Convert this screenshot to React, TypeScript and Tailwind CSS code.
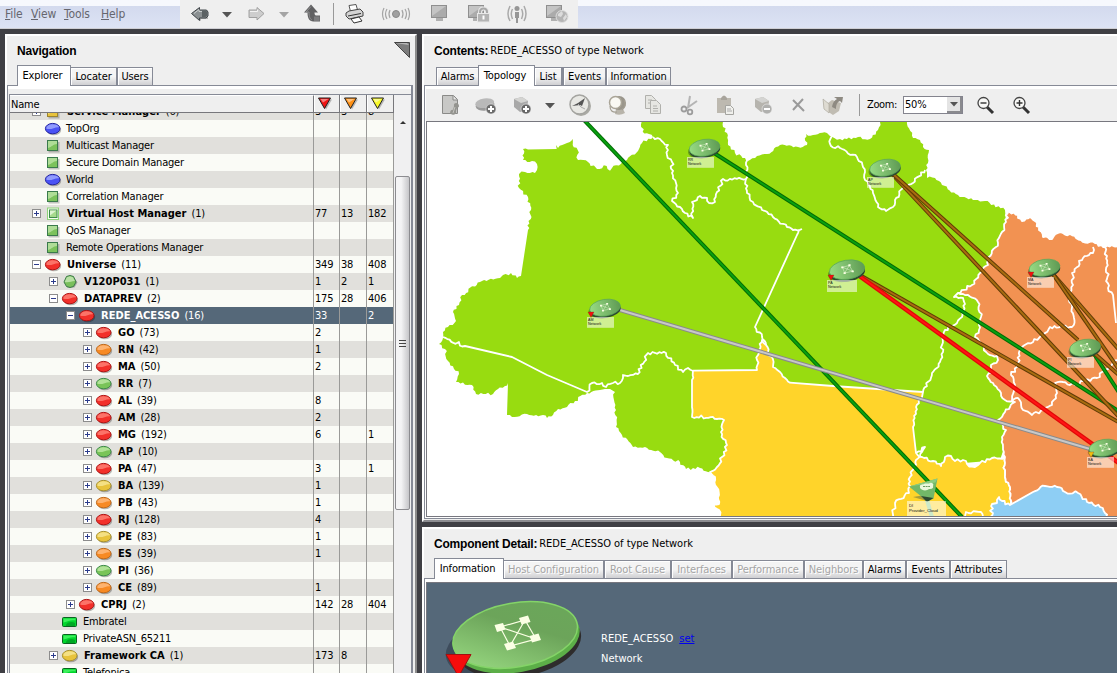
import React from 'react';

type Kind = 'red' | 'orange' | 'yellow' | 'green' | 'blue' | 'square' | 'ysquare' | 'framed' | 'hex' | 'card';
type Row = { n: string; c?: number; k: Kind; l: number; e?: '+' | '-'; v?: [string, string, string]; sel?: boolean };

const rows: Row[] = [
  { n: 'Service Manager', c: 6, k: 'ysquare', l: 0, e: '+', v: ['3', '3', '8'] },
  { n: 'TopOrg', k: 'blue', l: 0 },
  { n: 'Multicast Manager', k: 'square', l: 0 },
  { n: 'Secure Domain Manager', k: 'square', l: 0 },
  { n: 'World', k: 'blue', l: 0 },
  { n: 'Correlation Manager', k: 'square', l: 0 },
  { n: 'Virtual Host Manager', c: 1, k: 'framed', l: 0, e: '+', v: ['77', '13', '182'] },
  { n: 'QoS Manager', k: 'square', l: 0 },
  { n: 'Remote Operations Manager', k: 'square', l: 0 },
  { n: 'Universe', c: 11, k: 'red', l: 0, e: '-', v: ['349', '38', '408'] },
  { n: 'V120P031', c: 1, k: 'hex', l: 1, e: '+', v: ['1', '2', '1'] },
  { n: 'DATAPREV', c: 2, k: 'red', l: 1, e: '-', v: ['175', '28', '406'] },
  { n: 'REDE_ACESSO', c: 16, k: 'red', l: 2, e: '-', v: ['33', '', '2'], sel: true },
  { n: 'GO', c: 73, k: 'red', l: 3, e: '+', v: ['2', '', ''] },
  { n: 'RN', c: 42, k: 'orange', l: 3, e: '+', v: ['1', '', ''] },
  { n: 'MA', c: 50, k: 'red', l: 3, e: '+', v: ['2', '', ''] },
  { n: 'RR', c: 7, k: 'green', l: 3, e: '+' },
  { n: 'AL', c: 39, k: 'red', l: 3, e: '+', v: ['8', '', ''] },
  { n: 'AM', c: 28, k: 'red', l: 3, e: '+', v: ['2', '', ''] },
  { n: 'MG', c: 192, k: 'red', l: 3, e: '+', v: ['6', '', '1'] },
  { n: 'AP', c: 10, k: 'green', l: 3, e: '+' },
  { n: 'PA', c: 47, k: 'red', l: 3, e: '+', v: ['3', '', '1'] },
  { n: 'BA', c: 139, k: 'yellow', l: 3, e: '+', v: ['1', '', ''] },
  { n: 'PB', c: 43, k: 'orange', l: 3, e: '+', v: ['1', '', ''] },
  { n: 'RJ', c: 128, k: 'red', l: 3, e: '+', v: ['4', '', ''] },
  { n: 'PE', c: 83, k: 'yellow', l: 3, e: '+', v: ['1', '', ''] },
  { n: 'ES', c: 39, k: 'orange', l: 3, e: '+', v: ['1', '', ''] },
  { n: 'PI', c: 36, k: 'green', l: 3, e: '+' },
  { n: 'CE', c: 89, k: 'orange', l: 3, e: '+', v: ['1', '', ''] },
  { n: 'CPRJ', c: 2, k: 'red', l: 2, e: '+', v: ['142', '28', '404'] },
  { n: 'Embratel', k: 'card', l: 1 },
  { n: 'PrivateASN_65211', k: 'card', l: 1 },
  { n: 'Framework CA', c: 1, k: 'yellow', l: 1, e: '+', v: ['173', '8', ''] },
  { n: 'Telefonica', k: 'card', l: 1 },
];

const tones: Record<string, [string, string, string]> = {
  red: ['#ff8a7e', '#f2302a', '#b01414'],
  orange: ['#ffc08a', '#f78a24', '#c0691a'],
  yellow: ['#f8ea9c', '#e8c33c', '#a8912c'],
  green: ['#c4ecae', '#79c458', '#3c8a4a'],
  blue: ['#aab4ff', '#4a52f5', '#2424a0'],
};

function Glyph({ k }: { k: Kind }) {
  const t = tones[k];
  return (
    <svg width="18" height="16" viewBox="0 0 18 16" className="shrink-0">
      {t && (
        <g>
          <ellipse cx="9.8" cy="8.900" rx="7.4" ry="5.3" fill="#000" opacity=".28" />
          <ellipse cx="8.700" cy="7.600" rx="7.300" ry="5.200" fill={t[1]} stroke={t[2]} />
          <path d="M2.2 7.600C2.500 4.500 5.500 3.200 8.700 3.200S14.600 4.300 15.100 6.200C11 5.600 7 9.400 2.200 7.600z" fill={t[0]} opacity=".75" />
        </g>
      )}
      {(k === 'square' || k === 'ysquare') && (
        <g>
          <rect x="4.500" y="4" width="11" height="10.500" fill="#000" opacity=".22" />
          <rect x="3.500" y="2.500" width="10" height="10" fill={k === 'square' ? '#7cc25c' : '#e8c33c'} stroke={k === 'square' ? '#3a7a4c' : '#9a8430'} />
          <path d="M4 3h9v3c-4 0-5 3-9 4z" fill={k === 'square' ? '#c4e8b0' : '#f6e8a0'} opacity=".7" />
        </g>
      )}
      {k === 'framed' && (
        <g>
          <rect x="3.500" y="2" width="11" height="11.500" fill="#f4fff0" stroke="#8ed47a" />
          <rect x="5.500" y="4" width="7.500" height="7.500" fill="#a6da8c" stroke="#3f8a4c" />
          <path d="M6 4.500h6.500l-6.500 5z" fill="#dcf4d0" />
        </g>
      )}
      {k === 'hex' && (
        <g>
          <path d="M5 4h8.500l3 4.500-3 5H6z" fill="#000" opacity=".25" />
          <path d="M5.500 2.500L9 1.500l3.500 1 2.500 5.500-2.500 4.500L9 13.500l-3.500-1L3 8z" fill="#79bf5c" stroke="#3c7a48" />
          <path d="M5.800 3.200L9 2.300l3 .9 2 3.800c-4 0-6 2-10.300 1z" fill="#d4f0c4" opacity=".7" />
        </g>
      )}
      {k === 'card' && (
        <g>
          <rect x="1.500" y="3.500" width="14" height="9" rx="1" fill="#00d62c" stroke="#0a6420" />
          <path d="M2.500 4.500h12v2c-5-1-7 1-12 2z" fill="#3cf05c" />
          <path d="M5 11c1-3 6-4 9-2v3H5z" fill="#00a824" />
        </g>
      )}
    </svg>
  );
}

function TreeRow({ r, i }: { r: Row; i: number }) {
  const bg = r.sel ? 'bg-[#556879] text-white' : i % 2 ? 'bg-[#fafbf6]' : 'bg-[#e1e0dc]';
  const ink = r.sel ? 'text-white' : 'text-black';
  return (
    <div className={`flex h-[17px] w-[384px] shrink-0 items-center ${bg}`}>
      <div className="flex h-full w-[303px] items-center" style={{ paddingLeft: 22 + 17 * r.l }}>
        <div className="flex h-[9px] w-[9px] shrink-0">
          {r.e && (
            <svg width="9" height="9" viewBox="0 0 9 9">
              <rect x=".5" y=".5" width="8" height="8" fill="#fff" stroke="#8c8c8c" />
              <path d={r.e === '+' ? 'M2 4.500h5M4.500 2v5' : 'M2 4.500h5'} stroke="#2c3c8c" />
            </svg>
          )}
        </div>
        <div className="ml-[3px] flex"><Glyph k={r.k} /></div>
        {r.e ? (
          <div className={`ml-[5px] flex items-center gap-[5px] whitespace-pre ${ink}`}>
            <span className="font-bold tracking-[0.02px]">{r.n}</span>
            <span>({r.c})</span>
          </div>
        ) : (
          <div className="ml-[4px] whitespace-pre text-black">{r.n}</div>
        )}
      </div>
      <div className={`flex h-full w-[26px] items-center border-l border-[#9a9a98] pl-px ${ink}`}>{r.v?.[0]}</div>
      <div className={`flex h-full w-[27px] items-center border-l border-[#9a9a98] pl-px ${ink}`}>{r.v?.[1]}</div>
      <div className={`flex h-full w-[28px] items-center border-x border-[#9a9a98] pl-px ${ink}`}>{r.v?.[2]}</div>
    </div>
  );
}

function HeadCell({ w, fill }: { w: string; fill: string }) {
  return (
    <div className={`flex h-[17px] items-center border-l border-white bg-[#efefef] pl-[2px] ${w} border-r border-r-[#77777b]`}>
      <svg width="16" height="15" viewBox="0 0 16 15">
        <path d="M3 3.500h12L9 13.500z" fill="#000" opacity=".25" />
        <path d="M1.500 2h12L7.500 12.500z" fill={fill} stroke="#222" strokeLinejoin="round" />
        <path d="M3.500 3h8L6 6.500z" fill="#fff" opacity=".45" />
      </svg>
    </div>
  );
}

function Tab({ w, label, active, off }: { w: string; label: string; active?: boolean; off?: boolean }) {
  return active ? (
    <div className={`z-10 -mb-px flex h-[21px] shrink-0 justify-center border border-b-0 border-[#868a96] bg-white pt-[3px] pr-[3px] tracking-[-0.15px] text-black ${w}`}>{label}</div>
  ) : (
    <div className={`flex h-[18px] shrink-0 items-center justify-center border border-b-0 border-[#868a96] bg-linear-to-b from-[#f4f4f4] from-50% to-[#cfcfd2] pt-px tracking-[-0.1px] whitespace-pre shadow-[inset_1px_1px_0_#fff] ${w} ${off ? 'text-[#a4a4a4] [text-shadow:1px_1px_0_#fff]' : 'text-black'}`}>{label}</div>
  );
}

function Cell({ w, children }: { w: string; children: React.ReactNode }) {
  return (
    <div className={`flex shrink-0 items-center justify-center ${w}`}>
      <svg width="32" height="26" viewBox="-16 -13 32 26" className="shrink-0">{children}</svg>
    </div>
  );
}

const Caret = ({ c }: { c: string }) => <path d="M-5-2h10L0 3.500z" fill={c} />;
const Screen = () => (
  <g>
    <path d="M-3 4h7v3h-7z" fill="#b0b0b0" />
    <rect x="-7.500" y="-8.500" width="15" height="12" fill="#ababab" stroke="#8f8f8f" />
    <path d="M-7-8H7L-7 2z" fill="#c4c4c4" />
  </g>
);
const Cube = ({ sign }: { sign: '+' | '-' }) => (
  <g>
    <path d="M-7-6L1-8l6 4-1 9-7 2-6-5z" fill={sign === '+' ? '#a8a8a8' : '#b6b4ae'} />
    <path d="M-7-6L1-8l6 4-7 2z" fill="#d4d4d2" />
    <circle cx="5" cy="4" r="5" fill={sign === '+' ? '#666' : '#b0b0ae'} stroke="#efefef" strokeWidth=".6" />
    <path d={sign === '+' ? 'M2 4h6M5 1v6' : 'M2 4h6'} stroke="#fff" strokeWidth="2" />
  </g>
);

function TopTools() {
  return (
    <div className="flex h-[28px] w-[398px] items-stretch bg-[#efefef] pl-px">
      <Cell w="w-[38px]">
        <path d="M-7 1L1 7V5h7v-6l-1-3H1z" fill="#000" opacity=".25" />
        <path d="M-8.500-.5L-.5-6.500v2.500h7l1.500 2v4L6 4H-.5v2.500z" fill="#8b9092" stroke="#41464a" strokeLinejoin="round" />
        <path d="M-6-.5L-1-4.500V-2.500h6" fill="none" stroke="#c8cccc" />
        <path d="M2-3.500h4l1.500 2v3L5.500 3H2z" fill="#5c6264" />
      </Cell>
      <Cell w="w-[16px]"><Caret c="#555" /></Cell>
      <Cell w="w-[42px]">
        <path d="M8-.5L1-6.500V-4h-8v7.500h8V6z" fill="#cdcdcd" stroke="#a0a0a0" strokeLinejoin="round" />
        <path d="M-6-2.500H1.500V-4.500" fill="none" stroke="#f2f2f2" />
      </Cell>
      <Cell w="w-[14px]"><Caret c="#a4a4a4" /></Cell>
      <Cell w="w-[42px]">
        <path d="M-1-9.500l-7 8h3.500c0 5 1.500 9 6 9h6.500V1.500H4c-1 0-1.500-1-1.500-3H6z" fill="#606062" />
        <path d="M-1-7.500l-5 5.500h3c0 5 1 7 3 8" fill="none" stroke="#909090" />
        <path d="M2 2.500h5.500v4.500H2z" fill="#7c7c7e" />
      </Cell>
      <div className="mt-[3px] h-[22px] w-px bg-[#999]" />
      <Cell w="w-[40px]">
        <path d="M-5-8.500l7-1 2 7-7 2z" fill="#fff" stroke="#555" />
        <path d="M-8-1l3-2 11-2 3 3v4L-5 5l-3-3z" fill="#d4d4d4" stroke="#444" />
        <path d="M-6 2l13-2.500" stroke="#333" />
        <path d="M-3 5l8-2 3 4-8 2z" fill="#fff" stroke="#333" />
      </Cell>
      <Cell w="w-[44px]">
        <circle r="3.500" fill="#a0a0a0" stroke="#888" />
        <g fill="none" stroke="#a4a4a4" strokeWidth="1.200">
          <path d="M-6-4q-2 4 0 8M-9-5q-3 5 0 10M-12-6q-3 6 0 12M6-4q2 4 0 8M9-5q3 5 0 10M12-6q3 6 0 12" />
        </g>
      </Cell>
      <Cell w="w-[42px]"><Screen /></Cell>
      <Cell w="w-[38px]">
        <g transform="translate(-3 0)"><Screen /></g>
        <path d="M1 1v-3q0-3.500 3.500-3.500T8-2v3" fill="none" stroke="#e8e8e8" strokeWidth="4" />
        <path d="M1 1v-3q0-3.500 3.500-3.500T8-2v3" fill="none" stroke="#a8a8a8" strokeWidth="2" />
        <rect x="-1.500" y="-.5" width="12" height="8.500" fill="#b4b4b4" stroke="#e8e8e8" />
        <path d="M4.500 1.500v4" stroke="#fff" strokeWidth="2" />
      </Cell>
      <Cell w="w-[38px]">
        <circle cy="-5.500" r="2.500" fill="#969696" />
        <path d="M-2-2h4v6H1v5h-2V4h-1z" fill="#969696" />
        <path d="M-4.500-5q-2.500 4.500 0 10M-7-8q-4 8 0 15M4.500-5q2.500 4.500 0 10M7-8q4 8 0 15" fill="none" stroke="#a9a9a9" strokeWidth="1.500" />
      </Cell>
      <Cell w="w-[42px]">
        <g transform="translate(-3 0)"><Screen /></g>
        <circle cx="5" cy="2.500" r="6" fill="#b4b4b4" stroke="#dedede" />
        <path d="M1 0l4-3 1 3-2 3-3-1zM6 4l3-4 1 3-3 4z" fill="#dcdcdc" />
      </Cell>
    </div>
  );
}

function MapTools() {
  return (
    <div className="flex h-[32px] items-center bg-[#efefef]">
      <Cell w="w-[48px]">
        <path d="M-7.500-9.500h11l4 4v14h-15z" fill="#c8c8c6" stroke="#8a8a88" />
        <path d="M3-9v4h4" fill="#e8e8e8" stroke="#8a8a88" />
        <path d="M1 9c-2-1 0-5 2-4l1-4c-1-4 5-4 5 0 0 2-2 1-2 2l-1 3c1 3-3 5-5 3z" fill="#94948f" />
        <path d="M3 8l2-6" stroke="#c4c4c0" />
      </Cell>
      <Cell w="w-[24px]">
        <ellipse cx="-1" cy="0" rx="9.500" ry="5.500" fill="#9a9a9a" transform="rotate(-8)" />
        <ellipse cx="-1" cy="-2" rx="9.500" ry="4.800" fill="#b9b9b9" transform="rotate(-8)" />
        <circle cx="5" cy="4" r="5" fill="#6c6c6c" stroke="#efefef" strokeWidth=".5" />
        <path d="M2 4h6M5 1v6" stroke="#fff" strokeWidth="2" />
      </Cell>
      <Cell w="w-[46px]"><Cube sign="+" /></Cell>
      <Cell w="w-[12px]"><Caret c="#555" /></Cell>
      <Cell w="w-[48px]">
        <circle cx="1" cy="1" r="10" fill="#aaaaa4" />
        <circle cx="-.5" cy="-.5" r="9.500" fill="#e8e8e4" stroke="#a4a4a0" strokeWidth="1.500" />
        <path d="M5-7L2 1l-2-1-8 1 6-3z" fill="#555" />
        <path d="M-2-1l3 3 4 2" fill="none" stroke="#aaa" />
      </Cell>
      <Cell w="w-[26px]">
        <path d="M-1 4h7l2 4q-5 3-10 1z" fill="#b8b4aa" />
        <circle cx="2" cy="-2" r="7" fill="#9a968c" />
        <circle cx="-1.500" cy="-2.500" r="6" fill="#faf9f4" stroke="#aaa598" strokeWidth="1.500" />
        <path d="M-7 1q0 7 7 6M7-5q3 6-2 10" fill="none" stroke="#a39e92" strokeWidth="1.200" />
      </Cell>
      <Cell w="w-[46px]">
        <g fill="#e6e6e2" stroke="#b0b0ac">
          <path d="M-7.500-9.500h6l4 4v9h-10z" />
          <path d="M-2.500-4.500h6l4 4v9h-10z" />
          <path d="M-5-5h4M-5-2h3M0 1h4M0 3.500h5M0 6h5" />
        </g>
      </Cell>
      <Cell w="w-[26px]">
        <path d="M1-9L-1 3M8-4L-2 3" stroke="#b4b4b4" strokeWidth="2" />
        <circle cx="-5" cy="4" r="2.500" fill="none" stroke="#9c9c9c" strokeWidth="1.800" />
        <circle cx="1" cy="7" r="2.300" fill="none" stroke="#9c9c9c" strokeWidth="1.800" />
      </Cell>
      <Cell w="w-[46px]">
        <rect x="-8" y="-7" width="14" height="15" fill="#bdb9b0" />
        <path d="M-4-7q3-5 6 0v2h-6z" fill="#a8a49c" />
        <path d="M.5.500h5l3 3v6h-8z" fill="#f0f0ec" stroke="#a4a4a0" />
        <path d="M2 4h4M2 6h5" stroke="#aaa" />
      </Cell>
      <Cell w="w-[28px]"><g transform="translate(0 0)"><Cube sign="-" /></g></Cell>
      <Cell w="w-[44px]"><path d="M-5-5L6 6M5-6L-5 5" stroke="#9a9a9a" strokeWidth="2" /></Cell>
      <Cell w="w-[26px]">
        <path d="M-10-5l5 3 4-3 9 3-2 8-6 4-9-6z" fill="#c0bcb2" />
        <path d="M-10-6l6 5v9l-5-4z" fill="#dedbd2" stroke="#a8a498" strokeWidth=".6" />
        <path d="M-1 2c1-5 3-7 5-8L1-8h9l-1 6-2-2c-3 1-4 4-4 8z" fill="#8e8a82" />
      </Cell>
      <div className="ml-[13px] h-[22px] w-px bg-[#999]" />
      <span className="ml-[7px] w-[36px] whitespace-pre tracking-[-0.4px]">Zoom:</span>
      <div className="flex h-[18px] w-[60px] border border-[#84848e] bg-white">
        <span className="w-[43px] pl-px leading-[16px]">50%</span>
        <div className="flex w-[15px] items-center justify-center border-r-2 border-b-2 border-[#8a8a8e] bg-[#e4e4e4]">
          <svg width="8" height="5" viewBox="0 0 8 5"><path d="M0 0h8L4 4.500z" fill="#555" /></svg>
        </div>
      </div>
      {[false, true].map((plus) => (
        <div key={String(plus)} className={plus ? 'ml-[4px]' : 'ml-[6px]'}>
          <svg width="32" height="26" viewBox="-16 -13 32 26">
            <path d="M2 2l6 6" stroke="#333" strokeWidth="3" />
            <circle cx="-1.500" cy="-2" r="5.500" fill="#f8f8f6" stroke="#444" strokeWidth="1.300" />
            <path d={plus ? 'M-4.500-2h6M-1.500-5v6' : 'M-4.500-2h6'} stroke="#333" strokeWidth="1.400" />
          </svg>
        </div>
      ))}
    </div>
  );
}

// Terrain outlines are coarse point lists; rough() adds coastline detail between the points.
const hash = (a: number, b: number) => {
  const s = Math.sin(a * 12.9898 + b * 78.233) * 43758.5453;
  return s - Math.floor(s) - 0.5;
};
function rough(src: string, close?: boolean) {
  const p = src.trim().split(/\s+/).map((q) => q.split(',').map(Number));
  if (close) p.push(p[0]);
  let d = `M${p[0][0]} ${p[0][1]}`;
  for (let i = 1; i < p.length; i++) {
    const [x0, y0] = p[i - 1];
    const [x1, y1] = p[i];
    const len = Math.hypot(x1 - x0, y1 - y0);
    if (len < 26) {
      const n = Math.floor(len / 2.2);
      for (let j = 1; j < n; j++) {
        const x = x0 + ((x1 - x0) * j) / n;
        const y = y0 + ((y1 - y0) * j) / n;
        const h = hash(Math.round(x), Math.round(y)) * 3.2;
        d += `L${(x - ((y1 - y0) / len) * h).toFixed(1)} ${(y + ((x1 - x0) / len) * h).toFixed(1)}`;
      }
    }
    d += `L${x1} ${y1}`;
  }
  return close ? d + 'Z' : d;
}

const land =
  '641,115 642.700,131.700 649,134 653,137 642,143 638,151 627,160 612,168 610,170.700 606.700,166 597,169 588,162 578,160 577.700,150 572.700,145 572.700,139 567,143 558,148 556,145 556.700,149 528,149.500 523,149 523,160 532,161 537,164 537,170 535,173 525,172 519,174 519,188 528,197 531,210 528,230 521,276 517,278 511,273 503,275 500,278 482,281 462,295 459,305 453,312 456,321 448,327 443,332 443,338 439,344 445,349 448,361 459,374 456,382 472,385 476,394 493,394 508,383 507,415 512,417 527,414 543,415 547,418 553,415 558,409 567,407 575,401 587,393 600,390 610,389 615,392 614,400 616,410 616,427 622,435 633,447 645,447 660,452 667,458 680,462 686,469 700,468 708,472 760,480 1000,460 1020,400 1005,210 985,201 973,200 958,195 942,185 935,178 927,178 926,170 928,163 929,150 923,147 920,140 913,138 907,124 906,115 880,115 880,122 878,130 870,139 858,137 840,139 830,136 827,133 813,135 806,134 807,145 798,147 780,145 767,154 757,156 748,161 745,158 735,153 728,145 727,133 723,127 723,115';
const yellow =
  '762,340 758,355 757,370 693,370.700 692,380 692,407 692,417 713,417 717,419 724,420 721,432 727,445 722,457 717,467 710,472 715,477 715,485 719,495 719,504 713.700,504.700 719,510 720,520 1012,520 1010,487 1005,477 1005,463 1005,457 992,458 980,463 975,467 967,464 963,460 955,461 951,456 945,457 941,466 933,461 922,457 916,453 913,427 916,407 922,397 923,392 833,386 790,382.700 785,378 780,372 773,367 772,357 768,352 766,345';
const orange =
  '1007.700,211 1018,215 1022,221 1030,217 1039,227 1043,237 1052,239 1058,233 1070,234 1083,242 1095,243 1103,247 1125,246 1125,525 1010,525 1010,505 1010,487 1005,477 1005,463 1005,457 1003,447 1002,437 1006,430 998,420 1005,412 1015,402 1005,400 1001,393 993,383 987,376 992,373 991,365 998,360 997,356 988,354 982,345 975,337 979,330 981,317 978,302 968,295 958,293 972,285 980,273 988,265 988,260 998,243 1002,232 1006,222';
const blue =
  '1010,505 1002,501 999,497 997,503 992,504 991,522 1108,522 1105,513 1100,507 1087,502 1078,493 1065,492 1057,487 1045,486 1033,492';
const borders = [
  '653,137 660,139 668,145 667,155 672,162 672,173 676,183 678,193 672,201 680,207 685,213 693,218 692,202 700,196 707,198 709,203 715,202 717,192 723,179 746,179',
  '746,158 746,179 747,193 753,202 762,210 773,217 787,227 793,230 802,229',
  '799,230 797,235 755,327 762,337 766,345',
  '443,337 465,346 512,357 547,375 587,392 592,383 602,383 606,387 613,383 620,383 623,375 638,374 648,353 666,353 675,365 683,372 688,368 693,371',
  '830,134 831,146 840,148 857,157 863,167 865,180 873,193 878,207 886,211 893,207 895,200 903,188 913,183 925,170',
  '958,293 954,297 963,298 965,304 962,317 957,323 945,330 942,345 943,352 940,362 932,373 923,392',
  '1093,247 1093,253 1083,258 1072,273 1073,285 1069,295 1074,318 1072,327 1050,327 1043,335 1022,347 1017,367 1011,375 1015,387 1012,401 1018,398 1023,410 1032,415 1043,410 1052,405 1057,393 1055,383 1063,382 1075,385 1083,381 1097,378 1102,372 1118,360',
  '1105,247 1107,263 1108,288 1113,295 1116,323',
  '916,453 925,447 922,452 916,460 910,477 909,493 895,503 892,518',
  '965,516 966,512 981,512 983,516',
];

const links: [number, number, number, number, 'g' | 'b' | 'r' | 's'][] = [
  [583, 119, 962, 517, 'g'],
  [714, 153, 1120, 412, 'g'],
  [618, 309.5, 1090, 449, 's'],
  [892, 174, 1120, 418, 'b'],
  [893, 174, 1078, 340, 'b'],
  [858, 274, 1120, 423, 'b'],
  [858, 275, 1120, 464, 'r'],
  [1053, 274, 1120, 351, 'b'],
  [1053, 274, 1120, 371, 'b'],
  [1094, 354, 1120, 394, 'g'],
  [1095, 354, 1120, 376, 'b'],
];
const linkInk = { g: ['#046a04', '#08a010'], b: ['#5f3a06', '#a86c10'], r: ['#e00808', '#ff1414'], s: ['#8a8a8a', '#c8c8c8'] };

function Mesh() {
  return (
    <g stroke="#d8f0c8" strokeWidth=".5" fill="#fbffe4">
      <path d="M-4-2L2-3.500M-4-2L-2 3M2-3.500L5 1.500M-2 3L5 1.500M-4-2L5 1.500M2-3.500L-2 3" fill="none" />
      <path d="M-5-2.700h1.900v1.600H-5zM1.200-4.500h1.900v1.600H1.200zM-3 2.400h1.900V4H-3zM4 .8h1.900v1.600H4z" stroke="none" />
    </g>
  );
}

function Node({ x, y, s = 1, lx, ly, lw = 27, name, mark }: { x: number; y: number; s?: number; lx: number; ly: number; lw?: number; name: string; mark?: string }) {
  return (
    <g>
      <g transform={`translate(${x} ${y}) scale(${s})`}>
        <ellipse cx="-2" cy="2.500" rx="15" ry="8" fill="#234a20" opacity=".45" transform="rotate(-9)" />
        <ellipse cx="0" cy="2.500" rx="15.500" ry="8" fill="#2d4a30" transform="rotate(-9)" />
        <ellipse cx="0" cy=".2" rx="15.500" ry="8.300" fill="url(#disc)" stroke="#5aa858" strokeWidth=".7" transform="rotate(-9)" />
        <Mesh />
      </g>
      <rect x={lx} y={ly} width={lw} height={lw * 0.4} fill="#fff" opacity=".55" />
      <text x={lx + 1} y={ly + 4.2} fontSize="3.600" fill="#111">{name}</text>
      <text x={lx + 1} y={ly + 8} fontSize="3.600" fill="#111">Network</text>
      {mark && <path d={`M${lx + 1} ${ly - 5}h6l-3 5.500z`} fill={mark} stroke="#7a3010" strokeWidth=".3" />}
    </g>
  );
}

function TopologyMap() {
  return (
    <svg className="block h-[394px] w-[690px] shrink-0" viewBox="427 122 690 394" fontFamily="Liberation Sans, sans-serif" letterSpacing="0">
      <defs>
        <linearGradient id="disc" x1="0" x2="1"><stop offset="0" stopColor="#98dc84" /><stop offset="1" stopColor="#5f9a54" /></linearGradient>
      </defs>
      <path d={rough(land, true)} fill="#98dc10" />
      <g stroke="#fff" strokeWidth="1.800" strokeLinejoin="round">
        <path d={rough(yellow, true)} fill="#ffd42a" />
        <path d={rough(orange, true)} fill="#f29252" />
        <path d={rough(blue, true)} fill="#8ecef4" />
        {borders.map((b) => <path key={b} d={rough(b)} fill="none" />)}
      </g>
      {links.map(([a, b, c, d, k], i) => (
        <g key={i}>
          <path d={`M${a} ${b}L${c} ${d}`} stroke={linkInk[k][0]} strokeWidth={k === 'r' ? 4.5 : 4} />
          <path d={`M${a} ${b}L${c} ${d}`} stroke={linkInk[k][1]} strokeWidth="2" />
        </g>
      ))}
      <path d="M927 500l5 17" stroke="#8fcf88" strokeWidth="4" />
      <Node x={704.5} y={147.5} lx={687} ly={157} name="RR" />
      <Node x={885} y={167.5} lx={867} ly={177} name="AP" />
      <Node x={605} y={307.5} lx={587} ly={317} name="AM" mark="#f01010" />
      <Node x={847} y={269.5} s={1.15} lx={827} ly={280} lw={30} name="PA" mark="#f01010" />
      <Node x={1044.5} y={267.5} lx={1027} ly={277} name="MA" mark="#f01010" />
      <Node x={1085} y={347.5} lx={1067} ly={357} name="PI" />
      <Node x={1104.5} y={447.5} lx={1087} ly={457} name="BA" mark="#f0c010" />
      <path d="M913 497l14 4-2-6z" fill="#556644" opacity=".5" />
      <path d="M909 486.500l28.500-8-4 20-6 3z" fill="#72b868" />
      <path d="M909 486.500l28.500-8-2 4z" fill="#8ccc80" />
      <path d="M927 502l-6-6 12.500 2z" fill="#2d4a30" />
      <path d="M920 487c-1-3 3-2 4-3s5 0 6-1c3-1 4 2 3 3 1 3-3 3-4 3-2 2-7 2-9-1z" fill="#eaf8dc" />
      <path d="M923 486.500h7" stroke="#6a9a60" strokeDasharray="2 .6" />
      <rect x="907" y="501" width="39" height="15" fill="#fff" opacity=".55" />
      <text x="909" y="507" fontSize="4.200" fill="#111">DI</text>
      <text x="909" y="511.500" fontSize="4.200" fill="#111">Provider_Cloud</text>
    </svg>
  );
}

function BigNode() {
  return (
    <svg width="150" height="90" viewBox="440 583 150 90" className="block">
      <defs>
        <linearGradient id="big" x1="0" y1="1" x2="1" y2="0"><stop offset="0" stopColor="#9ee086" /><stop offset=".6" stopColor="#6ca45a" /><stop offset="1" stopColor="#6aa85a" /></linearGradient>
      </defs>
      <g transform="rotate(-10 515 634)">
        <ellipse cx="507" cy="645" rx="64" ry="32" fill="#3e4c5c" />
        <ellipse cx="517" cy="644.500" rx="63" ry="33" fill="#2e2c2c" />
        <ellipse cx="516" cy="639.500" rx="63.500" ry="33" fill="#5cae48" />
        <ellipse cx="515" cy="635" rx="63" ry="32" fill="url(#big)" stroke="#84d468" strokeWidth="1.500" />
      </g>
      <g stroke="#fbffe4" strokeWidth="1.200" fill="#fbffe4">
        <path d="M500 627L525 620 536 639 510 646zM500 627L536 639M525 620L510 646" fill="none" />
        <g stroke="none">
          <path d="M494.500 625l8.500-2 2.500 6.500-8.500 2.500zM519 618l9-2.500 2.500 6.500-9 2.500zM504 644l9-2.500 3 6.500-9 2.500zM529.500 636l9-2.500 2.500 6.500-9 2.500z" />
        </g>
      </g>
      <path d="M446 654.500h25l-11 19.500h-3z" fill="#f50c0c" stroke="#a01010" />
    </svg>
  );
}

function Title({ a, b }: { a: string; b?: string }) {
  return (
    <div className="flex h-[14px] items-center gap-[2px] whitespace-pre text-black">
      <span className="font-['Liberation_Sans',sans-serif] text-[12px] font-bold tracking-[-0.2px]">{a}</span>
      {b && <span className="tracking-[-0.03px]">{b}</span>}
    </div>
  );
}

export default function App() {
  return (
    <div className="flex h-[673px] w-[1117px] flex-col overflow-hidden bg-[#3f3f44] font-['DejaVu_Sans_Condensed','DejaVu_Sans',sans-serif] text-[11px] leading-[14px] tracking-[-0.2px] text-black [font-stretch:condensed]">
      <div className="flex h-[29px] shrink-0 border-b border-[#cfcfd4] bg-linear-to-b from-[#f6f8fd] from-20% via-[#d3daee] via-22% to-[#dde3f4]">
        <div className="flex w-[180px] pt-[6px] pl-[5px] text-[12px] leading-[16px] tracking-[-0.1px] text-[#66666e]">
          <span className="w-[26px]"><u>F</u>ile</span>
          <span className="w-[33px]"><u>V</u>iew</span>
          <span className="w-[37px]"><u>T</u>ools</span>
          <span><u>H</u>elp</span>
        </div>
        <TopTools />
      </div>

      <div className="mt-[5px] flex min-h-0 flex-1 gap-[5px] pl-[5px]">
        <div className="flex w-[412px] shrink-0 flex-col border-t-2 border-r-2 border-l-2 border-t-white border-r-[#8c8c8c] border-l-white bg-[#efefef]">
          <div className="flex h-[29px] shrink-0 items-start justify-between pt-[8px] pr-[4px] pl-[10px]">
            <Title a="Navigation" />
            <svg width="18" height="18" viewBox="0 0 18 18" className="-mt-[3px]">
              <path d="M1.500 1.500h15v15z" fill="#7c7c7c" stroke="#444" />
              <path d="M2 2h12l2 2z" fill="#b8b8b8" />
            </svg>
          </div>
          <div className="flex h-[20px] shrink-0 items-end pl-[10px]">
            <Tab w="w-[54px]" label="Explorer" active />
            <Tab w="w-[46px] border-l-0" label="Locater" />
            <Tab w="w-[36px]" label="Users" />
          </div>
          <div className="mr-[2px] flex min-h-0 flex-1 flex-col border-t border-r-2 border-l border-[#868a96] bg-[#efefef]">
            <div className="h-[3px] shrink-0 bg-white" />
            <div className="h-[5px] shrink-0" />
            <div className="ml-px flex min-h-0 flex-1 border-t border-l border-[#868a96]">
              <div className="flex w-[384px] shrink-0 flex-col">
                <div className="flex h-[18px] shrink-0 border-b border-[#77777b]">
                  <div className="flex h-[17px] w-[304px] items-center border-t border-r border-t-white border-r-[#77777b] pt-px pl-px">Name</div>
                  <HeadCell w="w-[26px]" fill="#f01414" />
                  <HeadCell w="w-[27px]" fill="#ff9014" />
                  <HeadCell w="w-[27px]" fill="#fafa28" />
                </div>
                <div className="flex min-h-0 flex-1 flex-col overflow-hidden">
                  <div className="-mt-[10px] flex flex-col">
                    {rows.map((r, i) => <TreeRow key={r.n} r={r} i={i} />)}
                  </div>
                </div>
              </div>
              <div className="flex flex-1 flex-col items-center bg-[#f0f0f1] pt-[24px]">
                <svg width="8" height="6" viewBox="0 0 8 6" className="shrink-0"><path d="M1 5l3-3 3 3z" fill="#333" /></svg>
                <div className="mt-[51px] flex h-[334px] w-[15px] shrink-0 items-center justify-center rounded-[2px] border border-[#8c8c90] bg-linear-to-r from-[#f4f4f5] from-40% to-[#c6c6c9]">
                  <svg width="8" height="9" viewBox="0 0 8 9"><path d="M0 1.500h7M0 4.500h7M0 7.500h7" stroke="#444" /></svg>
                </div>
              </div>
            </div>
          </div>
        </div>

        <div className="flex w-[695px] shrink-0 flex-col gap-[5px]">
          <div className="flex h-[488px] shrink-0 flex-col border-t-2 border-b-2 border-l-2 border-t-white border-b-[#8c8c90] border-l-white bg-[#efefef]">
            <div className="h-[29px] shrink-0 pt-[8px] pl-[10px]"><Title a="Contents:" b="REDE_ACESSO of type Network" /></div>
            <div className="flex h-[20px] shrink-0 items-end pl-[12px]">
              <Tab w="w-[42px] border-r-0" label="Alarms" />
              <Tab w="w-[57px]" label="Topology" active />
              <Tab w="w-[27px] border-l-0" label="List" />
              <Tab w="w-[44px] border-l-2" label="Events" />
              <Tab w="w-[65px]" label="Information" />
            </div>
            <div className="flex h-[434px] shrink-0 flex-col border-t border-b border-l border-[#868a96] bg-white pl-px">
              <div className="mt-[3px] shrink-0"><MapTools /></div>
              <div className="h-[396px] border-t border-b border-l border-[#77777f]"><TopologyMap /></div>
            </div>
          </div>

          <div className="flex min-h-0 flex-1 flex-col border-t-2 border-l-2 border-white bg-[#efefef]">
            <div className="h-[29px] shrink-0 pt-[8px] pl-[10px]"><Title a="Component Detail:" b="REDE_ACESSO of type Network" /></div>
            <div className="flex h-[20px] shrink-0 items-end pl-[10px]">
              <Tab w="w-[70px]" label="Information" active />
              <Tab w="w-[100px] border-l-0" label="Host Configuration" off />
              <Tab w="w-[67px]" label="Root Cause" off />
              <Tab w="w-[61px]" label="Interfaces" off />
              <Tab w="w-[72px]" label="Performance" off />
              <Tab w="w-[59px]" label="Neighbors" off />
              <Tab w="w-[43px]" label="Alarms" />
              <Tab w="w-[44px]" label="Events" />
              <Tab w="w-[57px]" label="Attributes" />
            </div>
            <div className="flex min-h-0 flex-1 flex-col border-t border-l border-[#868a96] bg-white pt-[3px] pl-px">
              <div className="flex flex-1 border-t border-l border-[#77777f] bg-[#556879] pl-[13px] text-white">
                <BigNode />
                <div className="flex flex-col gap-[6px] pt-[49px] pl-[11px] tracking-[0.02px]">
                  <div className="flex gap-[6px]"><span>REDE_ACESSO</span><span className="text-[#0000ee] underline">set</span></div>
                  <div>Network</div>
                </div>
              </div>
            </div>
          </div>
        </div>
      </div>
    </div>
  );
}
